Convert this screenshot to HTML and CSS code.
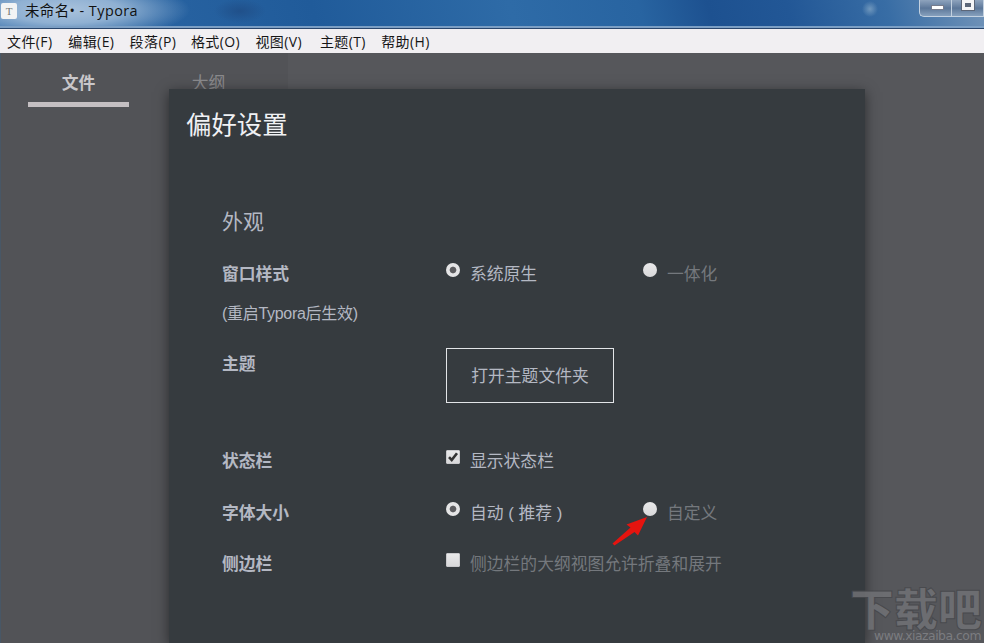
FILE: index.html
```html
<!DOCTYPE html>
<html lang="zh-CN">
<head>
    <meta charset="UTF-8">
    <meta name="viewport" content="width=device-width, initial-scale=1.0">
    <title>未命名• - Typora</title>
    <link rel="stylesheet" href="styles.css">
</head>
<body>
    <header class="titlebar">
        <span class="app-icon">T</span>
        <h1>未命名• - Typora</h1>
        <div class="window-buttons">
            <span class="win-btn"><i class="minimize"></i></span>
            <span class="win-btn"><i class="maximize"></i></span>
        </div>
    </header>
    <nav class="menubar">
        <span>文件(F)</span>
        <span>编辑(E)</span>
        <span>段落(P)</span>
        <span>格式(O)</span>
        <span>视图(V)</span>
        <span>主题(T)</span>
        <span>帮助(H)</span>
    </nav>
    <main class="workspace">
        <aside class="sidebar">
            <div class="tab active">文件</div>
            <div class="tab">大纲</div>
        </aside>

        <section class="dialog">
            <h2>偏好设置</h2>
            <div class="settings">
                <h3>外观</h3>
                <div class="row first">
                    <b>窗口样式</b>
                    <label><i class="radio checked"></i>系统原生</label>
                    <label class="off"><i class="radio"></i>一体化</label>
                </div>
                <p class="note">(重启Typora后生效)</p>
                <div class="row theme">
                    <b>主题</b>
                    <button type="button">打开主题文件夹</button>
                </div>
                <div class="row">
                    <b>状态栏</b>
                    <label>
                        <i class="checkbox"><svg width="14" height="14" viewBox="0 0 14 14"><path d="M3 7.2L5.7 10L11 3.2" fill="none" stroke="#333" stroke-width="2.6"/></svg></i>显示状态栏
                    </label>
                </div>
                <div class="row">
                    <b>字体大小</b>
                    <label><i class="radio checked"></i>自动 ( 推荐 )</label>
                    <label class="off"><i class="radio"></i>自定义</label>
                </div>
                <div class="row">
                    <b>侧边栏</b>
                    <label class="off wide"><i class="checkbox"></i>侧边栏的大纲视图允许折叠和展开</label>
                </div>
            </div>
        </section>

        <svg class="arrow" width="38" height="32" viewBox="0 0 38 32">
            <path d="M1.5 28.5L19.5 12.5L15.5 9.5L36 2L27 20.5L23.5 17L3.5 30.5Z" fill="#e5140f"/>
        </svg>

        <div class="watermark">
            <strong>下载吧</strong>
            <span>www.xiazaiba.com</span>
        </div>
    </main>
</body>
</html>
```

FILE: styles.css
```css
* {
    box-sizing: border-box;
}

body {
    margin: 0;
    height: 643px;
    overflow: hidden;
    display: flex;
    flex-direction: column;
    font-family: "Liberation Sans", "Noto Sans CJK SC", sans-serif;
    background-color: #56575b;
}

.titlebar {
    height: 29px;
    flex: none;
    display: flex;
    align-items: flex-start;
    padding-left: 1px;
    border-bottom: 1px solid #29466d;
    box-shadow: inset 0 -2px #7c9fc4;
    background:
        radial-gradient(ellipse 125px 30px at 65px 10px, #a9c2dc 0%, #8fb0d2 45%, transparent 100%),
        radial-gradient(ellipse 26px 12px at 240px 11px, #20508a, transparent),
        radial-gradient(circle 8px at 870px 9px, #6f97bd, transparent),
        linear-gradient(75deg, #2f6aa8 0%, #205b9a 32%, #2e6ba7 52%, #2864a1 65%, #1d5190 72%, #225796 80%, #386da5 90%, #7193b8 100%);
}

.app-icon {
    width: 16px;
    height: 16px;
    margin-top: 3px;
    border-radius: 2px;
    background-color: #f2f3f4;
    color: #777;
    font: 11px/16px "Liberation Serif", serif;
    text-align: center;
}

h1 {
    flex: 1;
    margin: 0 0 0 8px;
    font: 14.4px/22px "Open Sans", "Noto Sans CJK SC", sans-serif;
    letter-spacing: 0.45px;
    color: #111;
}

.window-buttons {
    display: flex;
    width: 65px;
    height: 17px;
    border: 1px solid #c3d1e0;
    border-width: 0 0 1px 1px;
    border-radius: 0 0 0 5px;
    background: linear-gradient(#8ea3bd, #637d9e 45%, #5b7698 50%, #86a0bd);
}

.win-btn {
    width: 35px;
    height: 16px;
    border-right: 1px solid #c3d1e0;
    display: flex;
    justify-content: center;
}

.minimize {
    width: 13px;
    height: 5px;
    margin: 5px 0 0 3px;
    background-color: #fff;
    border: 1px solid #777c8c;
}

.maximize {
    width: 12px;
    height: 10px;
    margin-right: 0;
    border: 3px solid #f4f4f6;
    outline: 1px solid #5c6678;
    background-color: #5c6678;
}

.menubar {
    height: 24px;
    flex: none;
    display: flex;
    padding-left: 7px;
    background-color: #f1eff2;
    color: #161616;
    font: 14px/25px "Open Sans", "Noto Sans CJK SC", sans-serif;
    letter-spacing: 0.4px;
}

.menubar span {
    width: 61.3px;
    white-space: nowrap;
}

.menubar span:nth-child(4),
.menubar span:nth-child(5) {
    width: 64.5px;
}

.workspace {
    position: relative;
    flex: 1;
    display: flex;
    min-height: 0;
}

.sidebar {
    width: 288px;
    flex: none;
    display: flex;
    padding-left: 28px;
    background-color: #525357;
    box-shadow: inset 1px 0 #485766;
}

.tab {
    width: 101px;
    height: 54px;
    margin-right: 29px;
    flex: none;
    padding-top: 6px;
    font-size: 16.8px;
    line-height: 50px;
    text-align: center;
    color: #8a8a8d;
}

.tab.active {
    font-weight: bold;
    color: #c9c7ca;
    border-bottom: 5px solid #c4bfc2;
}

/* preferences */
.dialog {
    width: 696px;
    flex: none;
    margin: 36px 0 0 -119px;
    padding: 18px 0 0 17px;
    background-color: #363b3f;
    box-shadow: 0 3px 12px rgba(0, 0, 0, 0.5);
    color: #b4b8c3;
    font-size: 16.8px;
}

h2 {
    margin: 0;
    font-size: 25.4px;
    line-height: 36px;
    font-weight: normal;
    color: #f0f1f4;
}

.settings {
    padding: 62px 0 0 36px;
}

h3 {
    margin: 0;
    font-size: 21px;
    line-height: 34px;
    font-weight: normal;
}

.row {
    display: grid;
    grid-template-columns: 224px 197px 1fr;
    align-items: center;
    height: 51.6px;
}

.row.first {
    height: 40px;
    margin-top: 14px;
}

.row label {
    display: flex;
    align-items: center;
    white-space: nowrap;
}

.row .wide {
    grid-column: 2 / 4;
}

.off {
    color: #74787d;
}

.note {
    margin: 0;
    height: 40px;
    font-size: 16px;
    line-height: 42px;
    letter-spacing: -0.3px;
}

.row.theme {
    height: 55px;
    margin: 15px 0 31.4px;
    align-items: start;
}

.theme b {
    line-height: 34px;
}

button {
    width: 168px;
    height: 55px;
    padding: 0 0 2px;
    border: 1px solid #e3e5e8;
    background: none;
    color: inherit;
    font: inherit;
}

.radio,
.checkbox {
    width: 14px;
    height: 14px;
    margin: 0 10px 6px 0;
    flex: none;
    background: linear-gradient(#e9e9ea, #d8d8da);
}

.radio {
    border-radius: 50%;
}

.radio.checked {
    background: radial-gradient(circle, #5c5c5f 0 2.8px, #e5e5e6 3.8px);
}

.checkbox {
    border: 1px solid #c9c9cc;
    border-radius: 1px;
}

.checkbox svg {
    display: block;
    margin: -1px;
}

.arrow {
    position: absolute;
    left: 611px;
    top: 462px;
}

.watermark {
    position: absolute;
    left: 850px;
    top: 533px;
    width: 134px;
    height: 57px;
    display: flex;
    flex-direction: column;
    opacity: 0.85;
}

.watermark strong {
    font: 900 44px/42px "Noto Sans CJK SC", sans-serif;
    color: #707175;
    -webkit-text-stroke: 1px #47484c;
    white-space: nowrap;
}

.watermark span {
    margin: 1px 0 0 24px;
    font: 12.4px/14px "DejaVu Sans", sans-serif;
    letter-spacing: -0.5px;
    color: #828387;
}
```
